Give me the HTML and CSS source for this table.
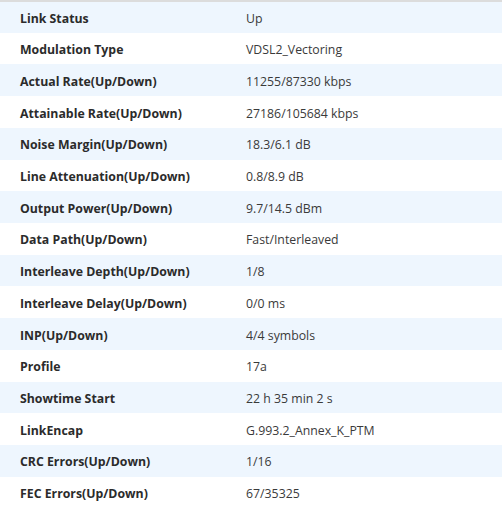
FILE: index.html
```html
<!DOCTYPE html>
<html>
<head>
<meta charset="utf-8">
<link rel="stylesheet" href="styles.css">
</head>
<body>
<table class="info">
<tbody>
<tr><td class="label">Link Status</td><td class="value">Up</td></tr>
<tr><td class="label">Modulation Type</td><td class="value">VDSL2_Vectoring</td></tr>
<tr><td class="label">Actual Rate(Up/Down)</td><td class="value">11255/87330 kbps</td></tr>
<tr><td class="label">Attainable Rate(Up/Down)</td><td class="value">27186/105684 kbps</td></tr>
<tr><td class="label">Noise Margin(Up/Down)</td><td class="value">18.3/6.1 dB</td></tr>
<tr><td class="label">Line Attenuation(Up/Down)</td><td class="value">0.8/8.9 dB</td></tr>
<tr><td class="label">Output Power(Up/Down)</td><td class="value">9.7/14.5 dBm</td></tr>
<tr><td class="label">Data Path(Up/Down)</td><td class="value">Fast/Interleaved</td></tr>
<tr><td class="label">Interleave Depth(Up/Down)</td><td class="value">1/8</td></tr>
<tr><td class="label">Interleave Delay(Up/Down)</td><td class="value">0/0 ms</td></tr>
<tr><td class="label">INP(Up/Down)</td><td class="value">4/4 symbols</td></tr>
<tr><td class="label">Profile</td><td class="value">17a</td></tr>
<tr><td class="label">Showtime Start</td><td class="value">22 h 35 min 2 s</td></tr>
<tr><td class="label">LinkEncap</td><td class="value">G.993.2_Annex_K_PTM</td></tr>
<tr><td class="label">CRC Errors(Up/Down)</td><td class="value">1/16</td></tr>
<tr><td class="label">FEC Errors(Up/Down)</td><td class="value">67/35325</td></tr>
</tbody>
</table>
</body>
</html>
```
FILE: styles.css
```css
html, body {
  margin: 0;
  padding: 0;
  background: #ffffff;
}
body {
  font-family: "Open Sans", "Noto Sans", sans-serif;
  font-size: 12.3px;
  color: #333333;
}
.info {
  width: 502px;
  border-collapse: collapse;
  border-top: 2px solid #dcdcdc;
}
.info tr {
  height: 31.72px;
}
.info tr:nth-child(odd) {
  background: #eef6fe;
}
.info td {
  padding: 2px 0 0 0;
  vertical-align: middle;
  white-space: nowrap;
}
.label {
  width: 226px;
  padding-left: 20px !important;
  font-weight: 700;
  color: #2b2b2b;
}
.value {
  color: #3a3a3a;
}
```
